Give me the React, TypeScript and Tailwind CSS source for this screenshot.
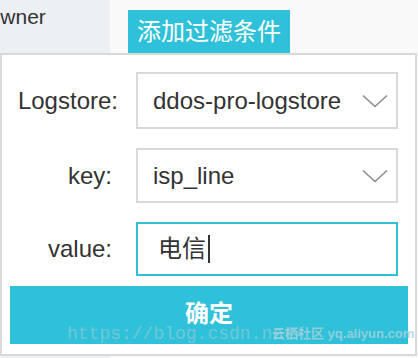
type SelectProps = {
  value: string;
  height: string;
};

function SelectBox({ value, height }: SelectProps) {
  return (
    <div
      className={`flex flex-1 items-center justify-between border-2 border-[#d9d9d9] bg-white pl-[15px] pr-[8px] ${height}`}
    >
      <span>{value}</span>
      <svg width="26" height="14" viewBox="0 0 26 14" fill="none" aria-hidden="true">
        <path d="M1 1.5 L13 12.5 L25 1.5" stroke="#8c8c8c" strokeWidth="1.6" />
      </svg>
    </div>
  );
}

export default function App() {
  return (
    <div className="relative flex h-[358px] w-[418px] overflow-hidden bg-[#f9f9f9] font-['Liberation_Sans','Noto_Sans_CJK_SC',sans-serif] text-[#333]">
      <aside className="w-[110px] shrink-0 bg-[#edf0f3]">
        <p className="-ml-[16px] pt-[5px] text-[21px] leading-[24px] text-[#333]">Owner</p>
      </aside>

      <main className="flex-1 pl-[18px] pt-[10px]">
        <button
          type="button"
          className="flex h-[43px] w-[162px] items-center justify-center bg-[#30c1da] text-[24px] text-white"
        >
          添加过滤条件
        </button>
      </main>

      {/* filter popover */}
      <section className="absolute left-0 top-[53px] h-[303px] w-[417px] border-2 border-[#d9d9d9] bg-white pl-[8px] pr-[7px] pt-[17px] text-[24px]">
        <div className="flex items-center pr-[10px]">
          <label className="w-[108px] shrink-0 whitespace-nowrap text-right">Logstore:</label>
          <div className="w-[18px] shrink-0" />
          <SelectBox value="ddos-pro-logstore" height="h-[57px]" />
        </div>

        <div className="mt-[19px] flex items-center pr-[10px]">
          <label className="w-[102px] shrink-0 text-right">key:</label>
          <div className="w-[24px] shrink-0" />
          <SelectBox value="isp_line" height="h-[55px]" />
        </div>

        <div className="mt-[19px] flex items-center pr-[10px]">
          <label className="w-[102px] shrink-0 text-right">value:</label>
          <div className="w-[24px] shrink-0" />
          <div className="flex h-[54px] flex-1 items-center border-2 border-[#30c1da] bg-white pl-[20px]">
            <span>电信</span>
            <span className="ml-[2px] h-[28px] w-[2px] bg-[#333]" />
          </div>
        </div>

        <button
          type="button"
          className="relative mt-[10px] flex h-[58px] w-full items-center justify-center bg-[#30c1da] pb-[2px] text-[24px] font-bold text-white"
        >
          确定
          <span className="pointer-events-none absolute bottom-[2px] left-[57px] whitespace-nowrap font-['Liberation_Mono',serif] text-[18px] font-normal leading-[16px] text-[#9ccbd4] opacity-60">
            https://blog.csdn.net/
          </span>
          <span className="pointer-events-none absolute bottom-[2px] left-[262px] whitespace-nowrap text-[13px] font-bold leading-[16px] text-[#a9d3db] opacity-80">
            云栖社区 yq.aliyun.com
          </span>
        </button>
      </section>
    </div>
  );
}
